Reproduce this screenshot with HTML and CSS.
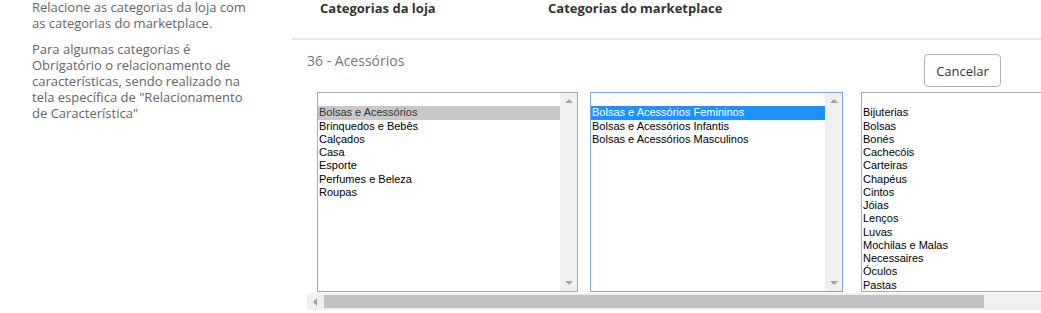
FILE: index.html
```html
<!DOCTYPE html>
<html lang="pt-BR">

<head>
    <meta charset="UTF-8">
    <meta name="viewport" content="width=device-width, initial-scale=1.0">
    <title>Relacionamento de Categorias</title>
    <link rel="stylesheet" href="styles.css">
</head>

<body>
    <div class="page">
        <div class="help">
            <p>Relacione as categorias da loja com as categorias do marketplace.</p>
            <p>Para algumas categorias é Obrigatório o relacionamento de características, sendo realizado na tela específica de "Relacionamento de Característica"</p>
        </div>

        <div class="panel">
            <div class="panel-head">
                <span class="col-loja">Categorias da loja</span>
                <span class="col-mkt">Categorias do marketplace</span>
            </div>

            <div class="panel-body">
                <div class="toolbar">
                    <span class="current">36 - Acessórios</span>
                    <button class="btn-cancel">Cancelar</button>
                </div>

                <div class="lists">
                    <div class="listbox">
                        <div class="options">
                            <div class="opt"></div>
                            <div class="opt selected">Bolsas e Acessórios</div>
                            <div class="opt">Brinquedos e Bebês</div>
                            <div class="opt">Calçados</div>
                            <div class="opt">Casa</div>
                            <div class="opt">Esporte</div>
                            <div class="opt">Perfumes e Beleza</div>
                            <div class="opt">Roupas</div>
                        </div>
                        <div class="vscroll"><span class="arr-up"></span><span class="arr-down"></span></div>
                    </div>

                    <div class="listbox focus">
                        <div class="options">
                            <div class="opt"></div>
                            <div class="opt active">Bolsas e Acessórios Femininos</div>
                            <div class="opt">Bolsas e Acessórios Infantis</div>
                            <div class="opt">Bolsas e Acessórios Masculinos</div>
                        </div>
                        <div class="vscroll"><span class="arr-up"></span><span class="arr-down"></span></div>
                    </div>

                    <div class="listbox wide">
                        <div class="options">
                            <div class="opt"></div>
                            <div class="opt">Bijuterias</div>
                            <div class="opt">Bolsas</div>
                            <div class="opt">Bonés</div>
                            <div class="opt">Cachecóis</div>
                            <div class="opt">Carteiras</div>
                            <div class="opt">Chapéus</div>
                            <div class="opt">Cintos</div>
                            <div class="opt">Jóias</div>
                            <div class="opt">Lenços</div>
                            <div class="opt">Luvas</div>
                            <div class="opt">Mochilas e Malas</div>
                            <div class="opt">Necessaires</div>
                            <div class="opt">Óculos</div>
                            <div class="opt">Pastas</div>
                        </div>
                    </div>
                </div>

                <div class="hscroll">
                    <span class="arr-left"></span>
                    <span class="thumb"></span>
                </div>
            </div>
        </div>
    </div>
</body>

</html>
```

FILE: styles.css
```css
body {
    margin: 0;
    padding: 0;
    font-family: "Open Sans", Arial, sans-serif;
    background-color: #fff;
    overflow: hidden;
}

.page {
    display: flex;
    width: 1041px;
    height: 313px;
    overflow: hidden;
}

/* coluna de ajuda */
.help {
    flex: 0 0 292px;
    padding-left: 32px;
    box-sizing: border-box;
    margin-top: -1px;
    font-size: 13px;
    line-height: 16px;
    color: #666;
}

.help p {
    margin: 0 0 10px 0;
    width: 224px;
}

/* painel principal */
.panel {
    flex: 0 0 749px;
    width: 749px;
    overflow: hidden;
}

.panel-head {
    display: flex;
    height: 38px;
    border-bottom: 2px solid #e5e5e5;
    padding-left: 28px;
    font-size: 13px;
    font-weight: bold;
    color: #333;
    line-height: 16px;
}

.col-loja {
    width: 228px;
}

.panel-body {
    padding-left: 15px;
}

.toolbar {
    display: flex;
    justify-content: space-between;
    align-items: flex-start;
    height: 52px;
    padding-right: 40px;
}

.current {
    margin-top: 11px;
    font-size: 14px;
    color: #777;
}

.btn-cancel {
    margin-top: 14px;
    width: 77px;
    height: 33px;
    border: 1px solid #b3b3b3;
    border-radius: 4px;
    background-color: #fff;
    font-family: "Open Sans", Arial, sans-serif;
    font-size: 13px;
    color: #333;
    padding: 0;
}

/* listas */
.lists {
    display: flex;
    gap: 12px;
    padding-left: 10px;
    height: 200px;
    overflow: hidden;
}

.listbox {
    display: flex;
    flex: 0 0 auto;
    width: 261px;
    height: 200px;
    box-sizing: border-box;
    border: 1px solid #a9a9a9;
    background-color: #fff;
    font-family: "Liberation Sans", Arial, sans-serif;
    font-size: 11px;
    color: #000;
}

.listbox.focus {
    width: 253px;
    border-color: #7ea5e3;
}

.listbox.wide {
    width: 240px;
    margin-left: 6px;
    border-right: none;
}

.options {
    flex: 1;
    overflow: hidden;
}

.opt {
    height: 13.25px;
    line-height: 13px;
    padding-left: 1px;
    white-space: nowrap;
}

.opt.selected {
    background-color: #c8c8c8;
    color: #333;
}

.opt.active {
    background-color: #1e90ff;
    color: #fff;
}

.vscroll {
    position: relative;
    width: 17px;
    background-color: #f0f0f0;
}

.arr-up,
.arr-down {
    position: absolute;
    left: 5px;
    width: 0;
    height: 0;
    border-left: 4px solid transparent;
    border-right: 4px solid transparent;
}

.arr-up {
    top: 6px;
    border-bottom: 4px solid #a3a3a3;
}

.arr-down {
    bottom: 6px;
    border-top: 4px solid #a3a3a3;
}

.hscroll {
    position: relative;
    height: 17px;
    margin-top: 1px;
    background-color: #f0f0f0;
}

.arr-left {
    position: absolute;
    left: 6px;
    top: 5px;
    width: 0;
    height: 0;
    border-top: 4px solid transparent;
    border-bottom: 4px solid transparent;
    border-right: 4px solid #a3a3a3;
}

.thumb {
    position: absolute;
    left: 17px;
    top: 2px;
    width: 660px;
    height: 13px;
    background-color: #c1c1c1;
}
```
